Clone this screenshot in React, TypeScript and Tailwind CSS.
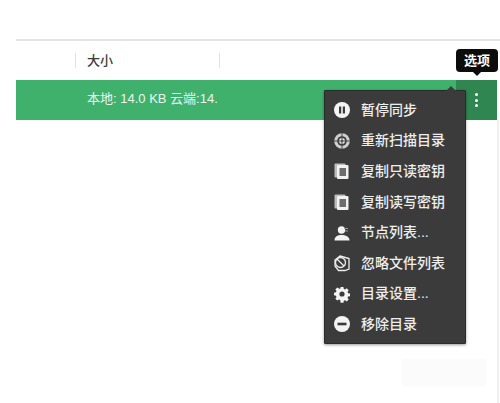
import React from "react";

const Circle = ({ children }: { children: React.ReactNode }) => (
  <svg viewBox="0 0 18 18" className="w-[18px] h-[18px]">{children}</svg>
);

const Pause = () => (
  <Circle>
    <circle cx="9" cy="9" r="8" fill="#f4f4f4" />
    <rect x="6" y="5.5" width="2.2" height="7" fill="#3b3b3b" />
    <rect x="9.8" y="5.5" width="2.2" height="7" fill="#3b3b3b" />
  </Circle>
);
const Target = () => (
  <Circle>
    <circle cx="9" cy="9" r="7.8" fill="#cfcfcf" />
    <circle cx="9" cy="9" r="4.8" fill="#3b3b3b" />
    <circle cx="9" cy="9" r="3" fill="#e8e8e8" />
    <circle cx="9" cy="9" r="1.2" fill="#777" />
    <path d="M9 1v16M1 9h16" stroke="#4a4a4a" strokeWidth="1" />
  </Circle>
);
const Copy = () => (
  <Circle>
    <rect x="1.5" y="1.5" width="11" height="14" rx="1" fill="#bdbdbd" />
    <rect x="4" y="3" width="11.5" height="14" rx="1" fill="#f2f2f2" />
    <rect x="6.5" y="6" width="6.5" height="8" fill="#6d6d6d" />
  </Circle>
);
const Person = () => (
  <Circle>
    <circle cx="8.5" cy="6" r="3.7" fill="#f2f2f2" />
    <path d="M1.5 16.5c0-4 3-5.5 7-5.5s8 1.5 8 5.5z" fill="#f2f2f2" />
    <path d="M11 4.5h4M12 7h3" stroke="#9a9a9a" strokeWidth="1.2" />
  </Circle>
);
const Ignore = () => (
  <Circle>
    <path d="M7 2l9 2.5v10.5l-4 1.5H5.5L2 12V6z" fill="none" stroke="#ededed" strokeWidth="1.3" />
    <circle cx="7.5" cy="8.5" r="5" fill="none" stroke="#ededed" strokeWidth="1.3" />
    <path d="M4 5l7 7" stroke="#ededed" strokeWidth="1.3" />
  </Circle>
);
const Gear = () => (
  <Circle>
    <path
      d="M7.4 1h3.2l.4 2.3 1.4.6 1.9-1.3 2.2 2.2-1.3 1.9.6 1.4 2.2.4v3l-2.2.4-.6 1.4 1.3 1.9-2.2 2.2-1.9-1.3-1.4.6-.4 2.2H7.4L7 15.7l-1.4-.6-1.9 1.3-2.2-2.2 1.3-1.9-.6-1.4L0 10.5v-3l2.2-.4.6-1.4-1.3-1.9 2.2-2.2 1.9 1.3L7 3.3z"
      fill="#f4f4f4"
      transform="translate(1 1) scale(.89)"
    />
    <circle cx="9" cy="9" r="2.6" fill="#3b3b3b" />
  </Circle>
);
const Minus = () => (
  <Circle>
    <circle cx="9" cy="9" r="8" fill="#f4f4f4" />
    <rect x="4.5" y="7.7" width="9" height="2.6" fill="#3b3b3b" />
  </Circle>
);

const items: [React.ComponentType, string][] = [
  [Pause, "暂停同步"],
  [Target, "重新扫描目录"],
  [Copy, "复制只读密钥"],
  [Copy, "复制读写密钥"],
  [Person, "节点列表..."],
  [Ignore, "忽略文件列表"],
  [Gear, "目录设置..."],
  [Minus, "移除目录"],
];

export default function App() {
  return (
    <div
      className="relative w-[500px] h-[403px] overflow-hidden bg-white"
      style={{ fontFamily: '"Liberation Sans", "Noto Sans CJK SC", sans-serif' }}
    >
      <div className="pt-[39px] pl-4 pr-[3px] h-full">
        <div className="flex items-center h-[41px] border-t-2 border-[#e4e4e4] -mr-[3px]">
          <div className="ml-[59px] w-px h-[15px] bg-[#e2e2e2]" />
          <div className="ml-[11px] w-[132px] text-[13px] font-medium text-[#3c3c3c]">大小</div>
          <div className="w-px h-[15px] bg-[#e2e2e2]" />
        </div>
        <div className="flex h-10">
          <div className="flex-1 flex items-center bg-[#3fb16d] pl-[71px] pb-[3px] text-[13px] text-[#eaf6ee]">
            <span className="whitespace-nowrap">本地: 14.0 KB 云端:14.</span>
          </div>
          <div className="w-[41px] flex flex-col items-center justify-center gap-[2.5px] bg-[#2f8650]">
            <span className="w-[3px] h-[3px] rounded-full bg-white" />
            <span className="w-[3px] h-[3px] rounded-full bg-white" />
            <span className="w-[3px] h-[3px] rounded-full bg-white" />
          </div>
        </div>
      </div>

      <div className="absolute left-[497px] top-[120px] bottom-0 w-[2px] bg-[#f0f0f0]" />
      <div className="absolute left-[402px] top-[359px] w-[84px] h-[27px] bg-[#fbfbfb]" />

      <div className="absolute left-[456px] top-[49px] w-[42px] h-[23px] rounded-[4px] bg-[#0c0c0c] flex items-center justify-center text-[13px] font-bold text-white">
        选项
        <span className="absolute left-[17px] top-[23px] w-0 h-0 border-x-[4px] border-x-transparent border-t-[4px] border-t-[#0c0c0c]" />
      </div>

      <div className="absolute left-[324px] top-[90px] w-[142px] h-[254px] bg-[#3b3b3b] border border-[#2b2b2b] rounded-[1px] shadow-[0_1px_3px_rgba(0,0,0,0.4)] flex flex-col pt-[4px]">
        <span className="absolute left-[121px] top-[-5px] w-0 h-0 border-x-[5px] border-x-transparent border-b-[5px] border-b-[#3b3b3b]" />
        {items.map(([Icon, label]) => (
          <div key={label} className="flex items-center h-[30.6px] pl-[8px] gap-[10px]">
            <Icon />
            <span className="text-[14px] font-medium text-[#eeeeee] whitespace-nowrap">{label}</span>
          </div>
        ))}
      </div>
    </div>
  );
}
